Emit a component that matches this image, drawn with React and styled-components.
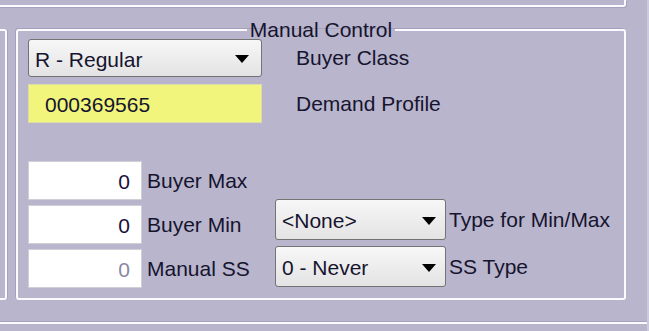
import React from 'react'
import styled, { createGlobalStyle } from 'styled-components'

const Global = createGlobalStyle`
  html, body {
    margin: 0;
    padding: 0;
    background: #b8b5cd;
  }
  body {
    font-family: "Liberation Sans", Arial, sans-serif;
    font-size: 21px;
    color: #16142e;
  }
`

const Page = styled.div`
  width: 649px;
  height: 331px;
  box-sizing: border-box;
  border-right: 2px solid #ccc9dc;
  overflow: hidden;
  display: flex;
  flex-direction: column;
`

const TopPanel = styled.div`
  width: 626px;
  height: 8px;
  box-sizing: content-box;
  margin-left: -2px;
  border-right: 2px solid #fbfbff;
  border-bottom: 2px solid #fbfbff;
  border-bottom-right-radius: 3px;
  box-shadow: 1px 1px 0 #a6a2bd;
`

const Middle = styled.div`
  display: flex;
  margin-top: 14px;
`

const SidePanel = styled.div`
  width: 15px;
  height: 267px;
  margin-left: -10px;
  margin-top: 8px;
  border: 2px solid #fbfbff;
  border-left: none;
  border-radius: 0 3px 3px 0;
  box-shadow: 1px 0 0 #a6a2bd;
`

const Group = styled.fieldset`
  width: 610px;
  box-sizing: border-box;
  margin: 0 0 0 9px;
  padding: 0 10px 10px;
  min-width: 0;
  border: 2px solid #fbfbff;
  border-radius: 3px;
  box-shadow: -1px -1px 0 #a6a2bd;
`

const Legend = styled.legend`
  margin: 0 auto;
  padding: 0 3px;
  font-size: 21px;
  line-height: 18px;
`

const TopBlock = styled.div`
  display: flex;
  flex-direction: column;
  gap: 7px;
`

const Row = styled.div`
  display: flex;
  align-items: center;
`

const DropDown = styled.div`
  box-sizing: border-box;
  width: ${p => p.$w}px;
  height: ${p => p.$h}px;
  display: flex;
  align-items: center;
  justify-content: space-between;
  padding: 2px ${p => p.$arrowGap}px 0 6px;
  border: 1px solid #737373;
  border-radius: 3px;
  background: linear-gradient(#f7f7f7, #e3e3e3);
  line-height: 1;
`

const Arrow = styled.span`
  width: 0;
  height: 0;
  border-left: 7px solid transparent;
  border-right: 7px solid transparent;
  border-top: 8px solid #000;
`

const ProfileBox = styled.div`
  box-sizing: border-box;
  width: 234px;
  height: 39px;
  display: flex;
  align-items: center;
  padding: 2px 0 0 16px;
  background: #f1f57c;
  border: 1px solid #dcdca8;
`

const SideLabel = styled.span`
  margin-left: ${p => p.$gap}px;
  white-space: nowrap;
`

const BottomBlock = styled.div`
  display: flex;
  margin-top: 38px;
`

const FieldColumn = styled.div`
  width: 247px;
  display: flex;
  flex-direction: column;
  gap: 5px;
`

const NumberBox = styled.div`
  box-sizing: border-box;
  width: 114px;
  height: 39px;
  display: flex;
  align-items: center;
  justify-content: flex-end;
  padding: 2px 11px 0 0;
  background: #fff;
  border: 1px solid #cfcfd6;
  color: ${p => (p.$disabled ? '#8b88a0' : '#1a0f3a')};
`

const SelectColumn = styled.div`
  display: flex;
  flex-direction: column;
  justify-content: flex-end;
  gap: 6px;
  padding-bottom: 1px;
`

const BottomPanel = styled.div`
  margin-top: 22px;
  height: 10px;
  border-top: 2px solid #fbfbff;
  box-shadow: 0 -1px 0 #a6a2bd;
`

const numbers = [
  { value: '0', label: 'Buyer Max' },
  { value: '0', label: 'Buyer Min' },
  { value: '0', label: 'Manual SS', disabled: true }
]

const selects = [
  { value: '<None>', label: 'Type for Min/Max' },
  { value: '0 - Never', label: 'SS Type' }
]

export default function App() {
  return (
    <>
      <Global />
      <Page>
        <TopPanel />
        <Middle>
          <SidePanel />
          <Group>
            <Legend>Manual Control</Legend>
            <TopBlock>
              <Row>
                <DropDown $w={234} $h={38} $arrowGap={12}>
                  R - Regular
                  <Arrow />
                </DropDown>
                <SideLabel $gap={34}>Buyer Class</SideLabel>
              </Row>
              <Row>
                <ProfileBox>000369565</ProfileBox>
                <SideLabel $gap={34}>Demand Profile</SideLabel>
              </Row>
            </TopBlock>
            <BottomBlock>
              <FieldColumn>
                {numbers.map(n => (
                  <Row key={n.label}>
                    <NumberBox $disabled={n.disabled}>{n.value}</NumberBox>
                    <SideLabel $gap={5}>{n.label}</SideLabel>
                  </Row>
                ))}
              </FieldColumn>
              <SelectColumn>
                {selects.map(s => (
                  <Row key={s.label}>
                    <DropDown $w={171} $h={41} $arrowGap={9}>
                      {s.value}
                      <Arrow />
                    </DropDown>
                    <SideLabel $gap={3}>{s.label}</SideLabel>
                  </Row>
                ))}
              </SelectColumn>
            </BottomBlock>
          </Group>
        </Middle>
        <BottomPanel />
      </Page>
    </>
  )
}
